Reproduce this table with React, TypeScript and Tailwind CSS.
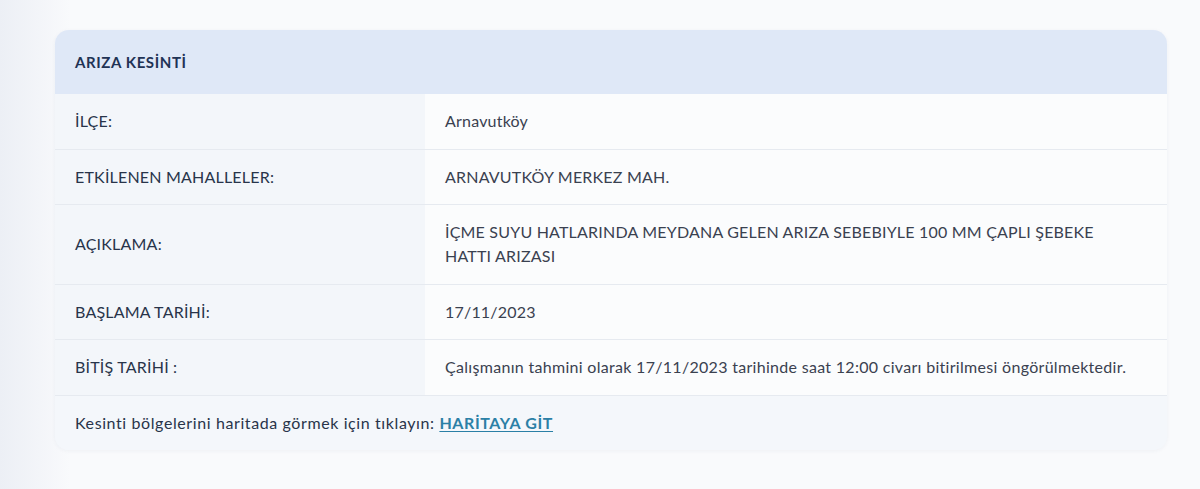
import React from "react";

const rows: { label: string; value: React.ReactNode }[] = [
  { label: "İLÇE:", value: "Arnavutköy" },
  { label: "ETKİLENEN MAHALLELER:", value: "ARNAVUTKÖY MERKEZ MAH." },
  {
    label: "AÇIKLAMA:",
    value: (
      <>
        İÇME SUYU HATLARINDA MEYDANA GELEN ARIZA SEBEBIYLE 100 MM ÇAPLI ŞEBEKE
        <br />
        HATTI ARIZASI
      </>
    ),
  },
  { label: "BAŞLAMA TARİHİ:", value: "17/11/2023" },
  {
    label: "BİTİŞ TARİHİ :",
    value: (
      <span className="tracking-[0.3px]">
        Çalışmanın tahmini olarak 17/11/2023 tarihinde saat 12:00 civarı bitirilmesi öngörülmektedir.
      </span>
    ),
  },
];

export default function App() {
  return (
    <div
      className="w-[1200px] h-[489px] bg-[linear-gradient(90deg,#eceff5_0px,#f3f5f9_40px,#f9fafc_70px,#f9fafc_100%)] pt-[30px] pl-[55px]"
      style={{ fontFamily: "Lato, 'Noto Sans', sans-serif" }}
    >
      <div className="w-[1112px] rounded-[14px] overflow-hidden bg-[#f4f7fb] shadow-[0_1px_4px_rgba(30,50,90,0.05)]">
        <div className="h-[64px] bg-[#dfe8f7] flex items-center px-5">
          <span className="text-[15px] font-bold text-[#1f3355] tracking-[0.6px]">ARIZA KESİNTİ</span>
        </div>
        {rows.map((r, i) => (
          <div key={i} className="flex border-b border-[#e6eaf0] text-[16px] tracking-[0.2px] leading-6">
            <div className="w-[370px] bg-[#f3f6fa] px-5 flex items-center py-[15.25px] text-[#28344a]">
              {r.label}
            </div>
            <div className="flex-1 bg-[#fbfcfd] px-5 flex items-center py-[15.25px] text-[#3a4150]">
              <div>{r.value}</div>
            </div>
          </div>
        ))}
        <div className="h-[54px] flex items-center px-5 bg-[#f4f7fb] text-[16px] tracking-[0.6px] text-[#28344a]">
          <span>Kesinti bölgelerini haritada görmek için tıklayın:&nbsp;</span>
          <a href="#" className="font-bold text-[#2b80a6] underline underline-offset-2 tracking-[0.6px]">HARİTAYA GİT</a>
        </div>
      </div>
    </div>
  );
}
